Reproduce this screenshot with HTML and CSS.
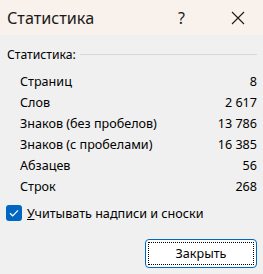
FILE: index.html
```html
<!DOCTYPE html>
<html lang="ru">
<head>
  <meta charset="UTF-8" />
  <title>Статистика</title>
  <link rel="stylesheet" href="styles.css">
</head>
<body>
  <div class="dialog">
    <div class="title-bar">
      <span class="title">Статистика</span>
      <span class="help">?</span>
      <span class="close">
        <svg width="14" height="14" viewBox="0 0 14 14">
          <path d="M1 1 L13 13 M13 1 L1 13" stroke="#1a1a1a" stroke-width="1.1" fill="none" />
        </svg>
      </span>
    </div>

    <div class="content">
      <div class="group-label">
        <span>Статистика:</span>
        <span class="rule"></span>
      </div>

      <div class="stats">
        <div class="stat-row"><span>Страниц</span><span>8</span></div>
        <div class="stat-row"><span>Слов</span><span>2 617</span></div>
        <div class="stat-row"><span>Знаков (без пробелов)</span><span>13 786</span></div>
        <div class="stat-row"><span>Знаков (с пробелами)</span><span>16 385</span></div>
        <div class="stat-row"><span>Абзацев</span><span>56</span></div>
        <div class="stat-row"><span>Строк</span><span>268</span></div>
      </div>

      <label class="check">
        <span class="box">
          <svg width="10" height="8" viewBox="0 0 10 8">
            <path d="M1 4.2 L3.7 6.8 L9 1.3" stroke="#fff" stroke-width="1.2" fill="none" />
          </svg>
        </span>
        <span><u>У</u>читывать надписи и сноски</span>
      </label>

      <div class="actions">
        <button class="close-btn"><span>Закрыть</span></button>
      </div>
    </div>
  </div>
</body>
</html>
```

FILE: styles.css
```css
* {
  box-sizing: border-box;
  margin: 0;
  padding: 0;
}

body {
  font-family: 'Noto Sans', 'Open Sans', sans-serif;
  font-size: 12.6px;
  color: #000;
  background: #f0f0f0;
  width: 263px;
  height: 274px;
  overflow: hidden;
}

.title-bar {
  height: 35px;
  background: #f9f1ec;
  display: flex;
  align-items: center;
  padding-left: 7px;
}

.title {
  font-size: 16.2px;
  color: #1a1a1a;
  flex: 1;
}

.help {
  font-size: 16px;
  color: #1a1a1a;
  width: 10px;
  margin-right: 41px;
}

.close {
  width: 34px;
  display: flex;
  padding-left: 2px;
}

.content {
  padding: 11px 6px 0 7px;
}

.group-label {
  display: flex;
  align-items: center;
  gap: 4px;
  height: 16px;
  font-size: 12.2px;
}

.rule {
  flex: 1;
  height: 1px;
  background: #d8d8d8;
}

.stats {
  padding: 9px 0 0 13px;
}

.stat-row {
  display: flex;
  justify-content: space-between;
  height: 21px;
  align-items: center;
}

.check {
  display: flex;
  align-items: center;
  gap: 5px;
  margin-top: 8px;
  margin-left: -1px;
  height: 16px;
}

.box {
  width: 16px;
  height: 16px;
  border-radius: 3px;
  background: #0067c0;
  display: flex;
  align-items: center;
  justify-content: center;
}

.actions {
  display: flex;
  justify-content: flex-end;
  margin-top: 18px;
}

.close-btn {
  width: 112px;
  height: 29px;
  background: #fff;
  border: 1px solid #0067c0;
  border-radius: 4px;
  padding: 2px;
  font-family: inherit;
  font-size: 12.6px;
  color: #000;
}

.close-btn span {
  display: flex;
  align-items: center;
  justify-content: center;
  height: 100%;
  border: 1px dotted #000;
}
```
